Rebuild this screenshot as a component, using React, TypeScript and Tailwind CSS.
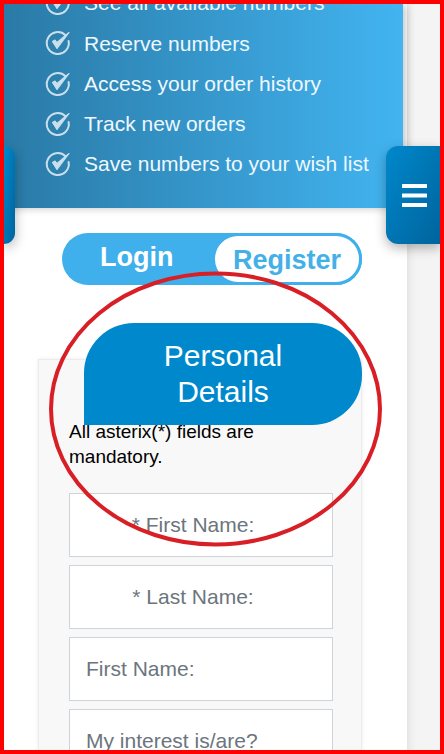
const perks = [
  'See all available numbers',
  'Reserve numbers',
  'Access your order history',
  'Track new orders',
  'Save numbers to your wish list',
]

function CheckCircle() {
  return (
    <svg width="28" height="28" viewBox="0 0 28 28" fill="none" className="shrink-0 opacity-75">
      <path d="M21.5 6.2A11 11 0 1 0 24.6 12" stroke="white" strokeWidth="2" strokeLinecap="round" />
      <path d="M8.5 12.5 L13 19.5 L25 3.5 L13 13.5 L11 11 Z" fill="white" stroke="white" strokeWidth="1.2" strokeLinejoin="round" />
    </svg>
  )
}

function Field({ label, center }: { label: string; center?: boolean }) {
  return (
    <input
      readOnly
      placeholder={label}
      className={`block w-full h-16 shrink-0 bg-white border border-[#ced4da] pl-4 text-[21px] placeholder:text-[#6c757d] outline-none ${center ? 'pr-8 text-center' : 'pr-4'}`}
    />
  )
}

export default function App() {
  return (
    <div className="relative h-[754px] overflow-hidden border-4 border-[#ff0000] bg-[#f4f4f4] font-['Liberation_Sans',Arial,sans-serif]">
      <div className="w-[403px] h-[900px] bg-white shadow-[0_0_10px_rgba(0,0,0,0.12)]">
        <div className="w-[399px] h-[204px] overflow-hidden bg-gradient-to-r from-[#2a7aa6] to-[#42b4f1] shadow-[2px_0_8px_rgba(0,0,0,0.25)]">
          <ul className="pl-[40px] -translate-y-[21px]">
            {perks.map((perk) => (
              <li key={perk} className="flex items-center gap-[12px] h-[40.25px] text-[21px] text-[#eef8fe]">
                <CheckCircle />
                <span className="whitespace-nowrap">{perk}</span>
              </li>
            ))}
          </ul>
        </div>

        <div className="relative mt-[25px] ml-[58px] flex h-[52px] w-[300px] rounded-full bg-[#3fb0ec]">
          <div className="w-[150px] pl-[38px] pt-[5px] text-[27px] font-bold leading-[38px] text-white">Login</div>
          <div className="w-[150px] rounded-full border-[3px] border-[#3fb0ec] bg-white pt-[5px] text-center text-[27px] font-bold leading-[38px] text-[#44b0e8]">
            Register
          </div>
        </div>

        <div className="mt-[74px] ml-[34px] w-[324px] h-[500px] border border-[#ececec] bg-[#f8f8f9] shadow-[0_0_4px_rgba(0,0,0,0.08)]">
          <div className="relative z-10 -mt-[37px] ml-[45px] flex h-[102px] w-[278px] items-center justify-center rounded-[50px_50px_50px_0] bg-[#0088cc] text-center text-[30px] leading-[36px] text-white">
            <span className="w-[180px]">Personal Details</span>
          </div>
          <div className="-mt-[6px] pl-[30px] pr-[28px]">
            <p className="text-[19px] leading-[25px] text-black">All asterix(*) fields are mandatory.</p>
            <div className="mt-[24px] flex flex-col gap-2">
              <Field label="* First Name:" center />
              <Field label="* Last Name:" center />
              <Field label="First Name:" />
              <Field label="My interest is/are?" />
            </div>
          </div>
        </div>
      </div>

      {/* side tabs */}
      <div className="absolute left-0 top-[142px] h-[98px] w-[11px] rounded-r-xl bg-gradient-to-br from-[#0088cc] to-[#00649c] shadow-[0_4px_12px_rgba(0,0,0,0.3)]" />
      <div className="absolute left-[382px] top-[142px] flex h-[98px] w-[54px] items-center rounded-l-xl bg-gradient-to-br from-[#0088cc] to-[#00649c] pl-4 shadow-[0_4px_12px_rgba(0,0,0,0.3)]">
        <svg width="25" height="23" viewBox="0 0 25 23" fill="white">
          <rect x="0" y="0" width="25" height="4" rx="0.5" />
          <rect x="0" y="9.5" width="25" height="4" rx="0.5" />
          <rect x="0" y="19" width="25" height="4" rx="0.5" />
        </svg>
      </div>

      {/* hand drawn annotation */}
      <svg className="pointer-events-none absolute left-[40px] top-[262px] z-20" width="345" height="290" viewBox="0 0 345 290" fill="none">
        <ellipse cx="171.5" cy="143" rx="164.5" ry="135.5" stroke="#d81f26" strokeWidth="4" />
      </svg>
    </div>
  )
}
